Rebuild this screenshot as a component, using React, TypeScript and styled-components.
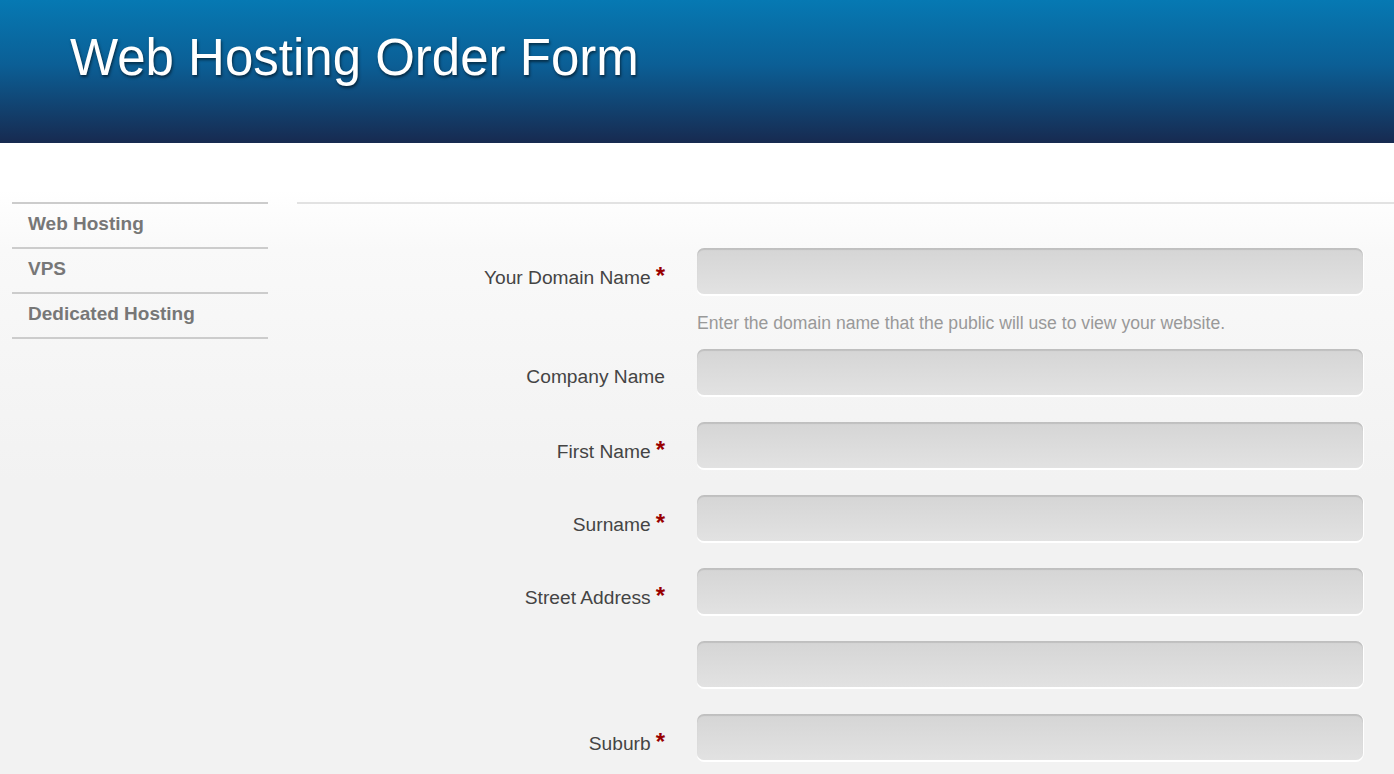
import React from 'react'
import styled, { createGlobalStyle } from 'styled-components'

const GlobalStyle = createGlobalStyle`
  html, body {
    margin: 0;
    padding: 0;
  }
  body {
    font-family: "Liberation Sans", Arial, sans-serif;
    background: linear-gradient(#ffffff 0, #ffffff 190px, #f9f9f9 250px, #f2f2f2 480px) no-repeat;
    background-color: #f2f2f2;
    min-height: 774px;
    overflow: hidden;
  }
`

const StyledHeader = styled.header`
  height: 143px;
  background: linear-gradient(#0679b3 0%, #0b5f96 45%, #172a50 100%);
  padding: 0 70px;
  box-sizing: border-box;
`

const StyledTitle = styled.h1`
  margin: 0;
  padding-top: 26px;
  font-size: 51px;
  line-height: 64px;
  font-weight: normal;
  color: #ffffff;
  text-shadow: 1px 2px 3px rgba(0, 0, 0, 0.55);
`

const StyledMain = styled.main`
  display: flex;
  align-items: flex-start;
  gap: 29px;
  padding: 59px 0 0 12px;
`

const StyledSideNav = styled.ul`
  list-style: none;
  margin: 0;
  padding: 0;
  width: 256px;
  flex-shrink: 0;
  border-top: 2px solid #cccccc;
`

const StyledSideNavItem = styled.li`
  height: 45px;
  box-sizing: border-box;
  border-bottom: 2px solid #cccccc;
  padding: 0 0 4px 16px;
  font-size: 19px;
  font-weight: bold;
  line-height: 39px;
  color: #777777;
`

const StyledFormPanel = styled.section`
  flex: 1;
  border-top: 2px solid #e2e2e2;
  padding: 44px 31px 0 0;
`

const StyledForm = styled.form`
  display: grid;
  grid-template-columns: 368px 1fr;
  column-gap: 32px;
`

const StyledLabel = styled.label`
  text-align: right;
  font-size: 19.2px;
  line-height: 46px;
  padding-top: 5px;
  color: #444444;
  white-space: nowrap;
`

const StyledRequired = styled.span`
  color: #990000;
  font-size: 24px;
  font-weight: bold;
  margin-left: 5px;
`

const StyledField = styled.div<{ $gap: number }>`
  margin-bottom: ${p => p.$gap}px;
`

const StyledInput = styled.input`
  display: block;
  width: 100%;
  height: 46px;
  box-sizing: border-box;
  border: none;
  border-radius: 7px;
  background: linear-gradient(#d5d5d5, #e2e2e2);
  box-shadow: inset 0 2px 1px rgba(0, 0, 0, 0.1), 0 2px 0 #ffffff, 1px 0 0 #ffffff;
  outline: none;
`

const StyledHelp = styled.p`
  margin: 19px 0 0;
  font-size: 17.6px;
  line-height: 21px;
  color: #999999;
`

interface IField {
  label: string
  required?: boolean
  help?: string
}

const fields: IField[] = [
  { label: 'Your Domain Name', required: true, help: 'Enter the domain name that the public will use to view your website.' },
  { label: 'Company Name' },
  { label: 'First Name', required: true },
  { label: 'Surname', required: true },
  { label: 'Street Address', required: true },
  { label: '' },
  { label: 'Suburb', required: true },
]

const navItems = ['Web Hosting', 'VPS', 'Dedicated Hosting']

export default function App() {
  return (
    <>
      <GlobalStyle />
      <StyledHeader>
        <StyledTitle>Web Hosting Order Form</StyledTitle>
      </StyledHeader>
      <StyledMain>
        <StyledSideNav>
          {navItems.map(item => (
            <StyledSideNavItem key={item}>{item}</StyledSideNavItem>
          ))}
        </StyledSideNav>
        <StyledFormPanel>
          <StyledForm>
            {fields.map((f, i) => (
              <React.Fragment key={i}>
                <StyledLabel>
                  {f.label}
                  {f.required && <StyledRequired>*</StyledRequired>}
                </StyledLabel>
                <StyledField $gap={f.help ? 15 : 27}>
                  <StyledInput type="text" />
                  {f.help && <StyledHelp>{f.help}</StyledHelp>}
                </StyledField>
              </React.Fragment>
            ))}
          </StyledForm>
        </StyledFormPanel>
      </StyledMain>
    </>
  )
}
